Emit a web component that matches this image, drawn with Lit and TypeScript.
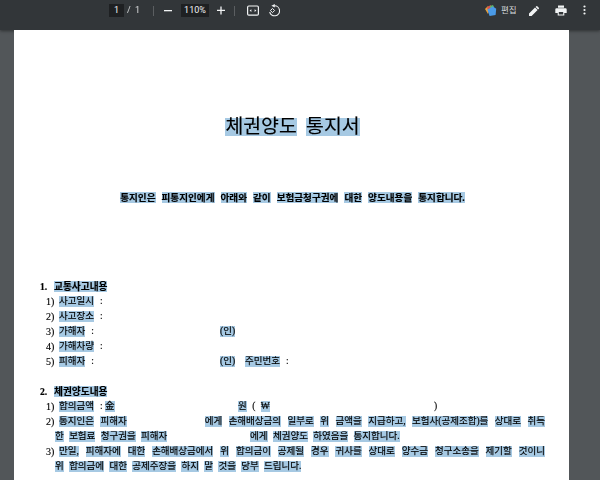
import { LitElement, html, css } from "lit";
import { customElement } from "lit/decorators.js";

const words = (t: string) => t.split(" ").map((w) => html`<span class="w">${w}</span> `);

@customElement("app-root")
export class AppRoot extends LitElement {
  static styles = css`
    :host { display: block; width: 600px; height: 480px; overflow: hidden; background: #525659; font-family: "Roboto", "Noto Sans CJK KR", sans-serif; }
    .bar { height: 30px; box-sizing: border-box; background: #323639; color: #f1f3f4; display: flex; align-items: flex-start; padding: 4px 0 0 109px; box-shadow: 0 1px 3px rgba(0,0,0,.45); position: relative; font-size: 9px; }
    .box { background: #1e2022; height: 13px; line-height: 13px; text-align: center; }
    .pg { width: 15px; }
    .of { margin-left: 3px; width: 26px; line-height: 13px; word-spacing: 2px; opacity: .85; }
    .sep { width: 1px; height: 10px; background: #5b5e61; margin-top: 2px; }
    .ico { display: block; color: #f1f3f4; }
    .zoom { width: 28px; margin: 0 7px 0 8px; }
    .spacer { flex: 1; }
    .edit { font-size: 8.5px; line-height: 13px; margin: 0 11px 0 4px; width: 17px; color: #d5d8da; }
    .canvas { padding-left: 14px; }
    .page { width: 555px; height: 450px; box-sizing: border-box; background: #fff; overflow: hidden; padding: 88px 24px 0 26px; color: #000; font-family: "Liberation Serif", "Noto Sans CJK KR", serif; font-size: 9.5px; filter: blur(.35px); -webkit-text-stroke: .15px #000; }
    .w { display: inline-block; background: #a6c9e3; line-height: 11px; height: 11px; vertical-align: top; }
    .title { text-align: center; font-size: 19.4px; font-weight: 400; margin: 0; height: 18px; word-spacing: 4.5px; }
    .title .w { line-height: 18px; height: 18px; }
    .intro { text-align: center; font-size: 9.6px; font-weight: 700; margin: 56px 0 0; height: 11px; line-height: 11px; word-spacing: 3.6px; }
    h2 { margin: 78px 0 0; font-size: 9.7px; font-weight: 700; display: flex; height: 15px; line-height: 11px; }
    h2 b { width: 14px; }
    h2.second { margin-top: 15px; }
    .row { display: flex; height: 15px; line-height: 11px; padding-left: 6px; }
    .no { width: 13px; flex: none; font-size: 10px; }
    .c1 { width: 161px; flex: none; }
    .c2 { width: 179px; flex: none; }
    .c3 { width: 196px; flex: none; word-spacing: 3px; }
    .c4 { width: 25px; flex: none; }
    .j { flex: 1; text-align: justify; text-align-last: justify; }
    .gapA { display: inline-block; width: 65px; }
    .gapB { display: inline-block; width: 72px; }
    .cont { height: 15px; line-height: 11px; padding-left: 15px; word-spacing: 3px; }
    .colon { margin-left: 6px; }
  `;

  render() {
    return html`
      <div class="bar">
        <div class="box pg">1</div>
        <div class="of">/ 1</div>
        <div class="sep"></div>
        <svg class="ico" style="margin-left:9px" width="10" height="13" viewBox="0 0 10 13"><rect x="1" y="6" width="8" height="1.3" fill="currentColor"/></svg>
        <div class="box zoom">110%</div>
        <svg class="ico" width="10" height="13" viewBox="0 0 10 13"><path d="M1 6.400h8M5 2.400v8" stroke="currentColor" stroke-width="1.300"/></svg>
        <div class="sep" style="margin-left:8px"></div>
        <svg class="ico" style="margin-left:12px" width="12" height="13" viewBox="0 0 12 13"><rect x=".6" y="2" width="10.800" height="9.200" rx="1.200" fill="none" stroke="currentColor" stroke-width="1.200"/><path d="M4.400 5.200 2.600 6.600l1.800 1.400zM7.600 5.200l1.800 1.400-1.800 1.400z" fill="currentColor"/></svg>
        <svg class="ico" style="margin-left:9px" width="12" height="13" viewBox="0 0 12 13"><path d="M6.500 1.800a5 5 0 1 1-4.800 6.200" fill="none" stroke="currentColor" stroke-width="1.100"/><path d="M3.400 1.800 6.800 0v3.600z" fill="currentColor"/><path d="M4.500 4.500 2.400 6.500l2.100 2.100 2.100-2.100z" fill="none" stroke="currentColor" stroke-width="1"/></svg>
        <div class="spacer"></div>
        <svg class="ico" width="13" height="13" viewBox="0 0 13 13"><path d="M1 5 4 2l2 2-2 6z" fill="#e9a23b"/><path d="M3 3.500 6.500 1 8 3.500l-3 6z" fill="#d9534f"/><path d="M6 2l3-1 1 2-3 5z" fill="#5fb56b"/><path d="M3.400 5.500 9 2.600l3.200 2.200-.6 6.200-6 1z" fill="#4a9be8"/></svg>
        <div class="edit">편집</div>
        <svg class="ico" width="10" height="13" viewBox="0 0 10 13"><path d="M0 9.400V12h2.600l6-6L6 3.400zM9.800 4.700a.7.700 0 0 0 0-1L8.300 2.200a.7.700 0 0 0-1 0L6.600 2.900 9.100 5.400z" fill="currentColor"/></svg>
        <svg class="ico" style="margin-left:16px" width="12" height="13" viewBox="0 0 12 13"><path d="M3 1.500h6v2.200H3zM1.500 4.300h9A1.200 1.200 0 0 1 11.700 5.500V9H9.300v2.400H2.700V9H.3V5.500A1.200 1.200 0 0 1 1.500 4.300zM3.800 8v2.400h4.400V8z" fill="currentColor" fill-rule="evenodd"/></svg>
        <svg class="ico" style="margin:0 14px 0 16px" width="3" height="13" viewBox="0 0 3 13"><circle cx="1.500" cy="2.500" r="1.100" fill="currentColor"/><circle cx="1.500" cy="6" r="1.100" fill="currentColor"/><circle cx="1.500" cy="9.500" r="1.100" fill="currentColor"/></svg>
      </div>
      <div class="canvas">
        <div class="page">
          <h1 class="title">${words("체권양도 통지서")}</h1>
          <p class="intro">${words("통지인은 피통지인에게 아래와 같이 보험금청구권에 대한 양도내용을 통지합니다.")}</p>
          <h2><b>1.</b><span class="w">교통사고내용</span></h2>
          <div class="row"><span class="no">1)</span><span class="w">사고일시</span><span class="colon">:</span></div>
          <div class="row"><span class="no">2)</span><span class="w">사고장소</span><span class="colon">:</span></div>
          <div class="row"><span class="no">3)</span><div class="c1"><span class="w">가해자</span><span class="colon">:</span></div><span class="w">(인)</span></div>
          <div class="row"><span class="no">4)</span><span class="w">가해차량</span><span class="colon">:</span></div>
          <div class="row"><span class="no">5)</span><div class="c1"><span class="w">피해자</span><span class="colon">:</span></div><div class="c4"><span class="w">(인)</span></div><span class="w">주민번호</span><span class="colon">:</span></div>
          <h2 class="second"><b>2.</b><span class="w">체권양도내용</span></h2>
          <div class="row"><span class="no">1)</span><div class="c2"><span class="w">합의금액</span><span class="colon">:</span> <span class="w">金</span></div><div class="c3"><span class="w">원</span> ( <span class="w">₩</span></div><span>)</span></div>
          <div class="row"><span class="no">2)</span><div class="j">${words("통지인은 피해자")}<span class="gapA"></span> ${words("에게 손해배상금의 일부로 위 금액을 지급하고, 보험사(공제조합)를 상대로 취득")}</div></div>
          <div class="cont">${words("한 보험료 청구권을 피해자")}<span class="gapB"></span> ${words("에게 체권양도 하였음을 통지합니다.")}</div>
          <div class="row"><span class="no">3)</span><div class="j">${words("만일, 피해자에 대한 손해배상금에서 위 합의금이 공제될 경우 귀사를 상대로 양수금 청구소송을 제기할 것이니")}</div></div>
          <div class="cont">${words("위 합의금에 대한 공제주장을 하지 말 것을 당부 드립니다.")}</div>
        </div>
      </div>
    `;
  }
}
